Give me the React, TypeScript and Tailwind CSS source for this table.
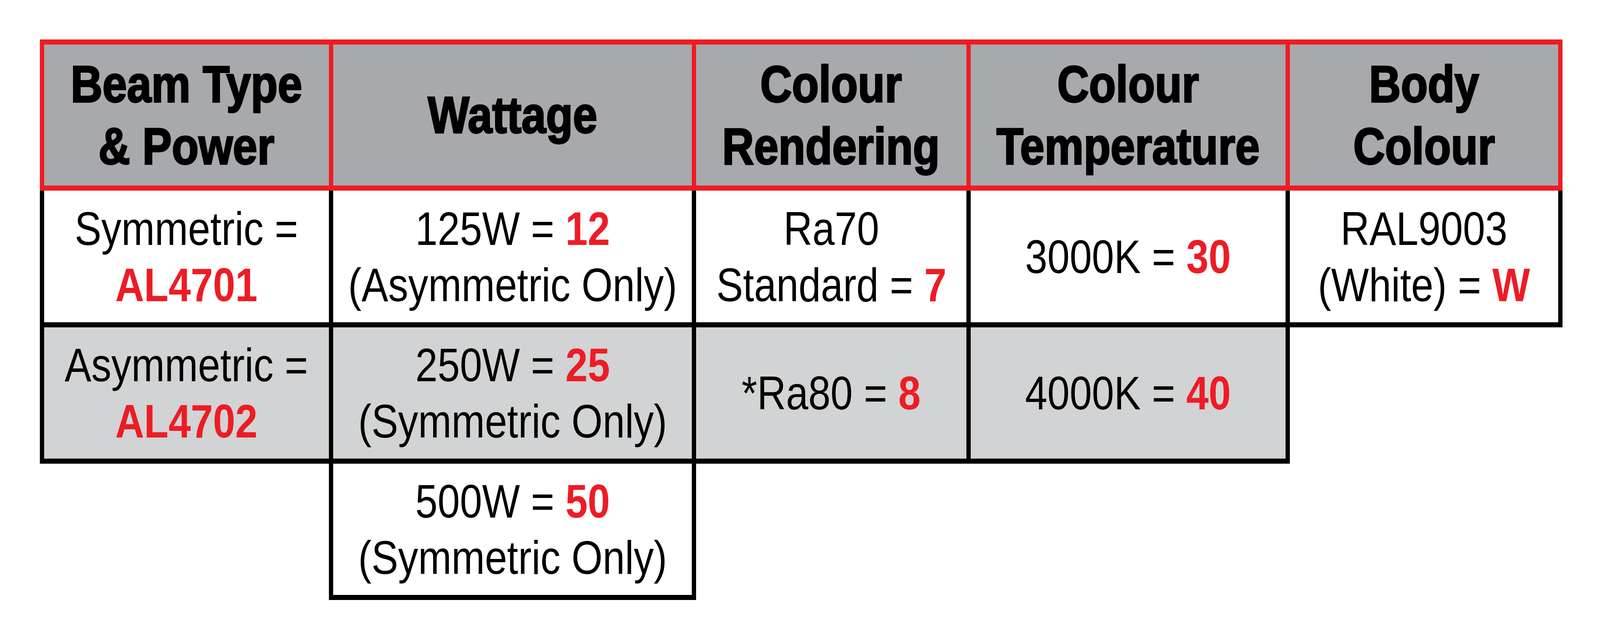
import React from "react";

// widths follow vw, heights follow vh: the sheet was laid out for a 4800x1600 frame
const RED = "text-[#ed1c24] font-bold";

function useSquash() {
  // horizontal squeeze for the text when the window is not 3:1
  const w = typeof window !== "undefined" ? window.innerWidth : 4800;
  const h = typeof window !== "undefined" ? window.innerHeight : 1600;
  return w / 4800 / (h / 1600);
}

function Head({ first, sx, children }: { first?: boolean; sx: number; children: React.ReactNode }) {
  return (
    <div
      className={
        "flex items-center justify-center bg-[#a7a9ac] border-solid border-[#ed1c24] border-t-[0.8125vh] border-r-[0.271vw] border-b-[0.8125vh] text-center text-[8.25vh] leading-[9.9375vh] font-bold text-black [-webkit-text-stroke:0.24vh_black] " +
        (first ? "border-l-[0.271vw]" : "")
      }
    >
      <div className="whitespace-nowrap" style={{ transform: `scaleX(${sx})` }}>
        {children}
      </div>
    </div>
  );
}

function Cell({
  first,
  shaded,
  sx,
  children,
}: {
  first?: boolean;
  shaded?: boolean;
  sx: number;
  children: React.ReactNode;
}) {
  return (
    <div
      className={
        "flex items-center justify-center border-solid border-black border-r-[0.271vw] border-b-[0.8125vh] text-center text-[7.5vh] leading-[9vh] text-black " +
        (first ? "border-l-[0.271vw] " : "") +
        (shaded ? "bg-[#d1d3d4]" : "bg-white")
      }
    >
      <div className="whitespace-nowrap" style={{ transform: `scaleX(${sx})` }}>
        {children}
      </div>
    </div>
  );
}

export default function App() {
  const sx = useSquash();
  return (
    <div className="w-full h-screen overflow-hidden bg-white font-['Liberation_Sans',Arial,sans-serif] pt-[6.3125vh] pl-[2.479vw]">
      <div className="grid grid-cols-[18.354vw_22.667vw_17.167vw_19.938vw_17.063vw] grid-rows-[24.1875vh_21.875vh_21.8125vh_21.8125vh]">
        {/* cabecera */}
        <Head first sx={sx}>
          Beam Type
          <br />& Power
        </Head>
        <Head sx={sx}>Wattage</Head>
        <Head sx={sx}>
          Colour
          <br />
          Rendering
        </Head>
        <Head sx={sx}>
          Colour
          <br />
          Temperature
        </Head>
        <Head sx={sx}>
          Body
          <br />
          Colour
        </Head>

        {/* fila 1 */}
        <Cell first sx={sx}>
          Symmetric =<br />
          <span className={RED}>AL4701</span>
        </Cell>
        <Cell sx={sx}>
          125W = <span className={RED}>12</span>
          <br />
          (Asymmetric Only)
        </Cell>
        <Cell sx={sx}>
          Ra70
          <br />
          Standard = <span className={RED}>7</span>
        </Cell>
        <Cell sx={sx}>
          3000K = <span className={RED}>30</span>
        </Cell>
        <Cell sx={sx}>
          RAL9003
          <br />
          (White) = <span className={RED}>W</span>
        </Cell>

        {/* fila 2 */}
        <Cell first shaded sx={sx}>
          Asymmetric =<br />
          <span className={RED}>AL4702</span>
        </Cell>
        <Cell shaded sx={sx}>
          250W = <span className={RED}>25</span>
          <br />
          (Symmetric Only)
        </Cell>
        <Cell shaded sx={sx}>
          *Ra80 = <span className={RED}>8</span>
        </Cell>
        <Cell shaded sx={sx}>
          4000K = <span className={RED}>40</span>
        </Cell>
        <div />

        {/* fila 3 */}
        <div className="border-solid border-black border-r-[0.271vw]" />
        <Cell sx={sx}>
          500W = <span className={RED}>50</span>
          <br />
          (Symmetric Only)
        </Cell>
        <div />
        <div />
        <div />
      </div>
    </div>
  );
}
